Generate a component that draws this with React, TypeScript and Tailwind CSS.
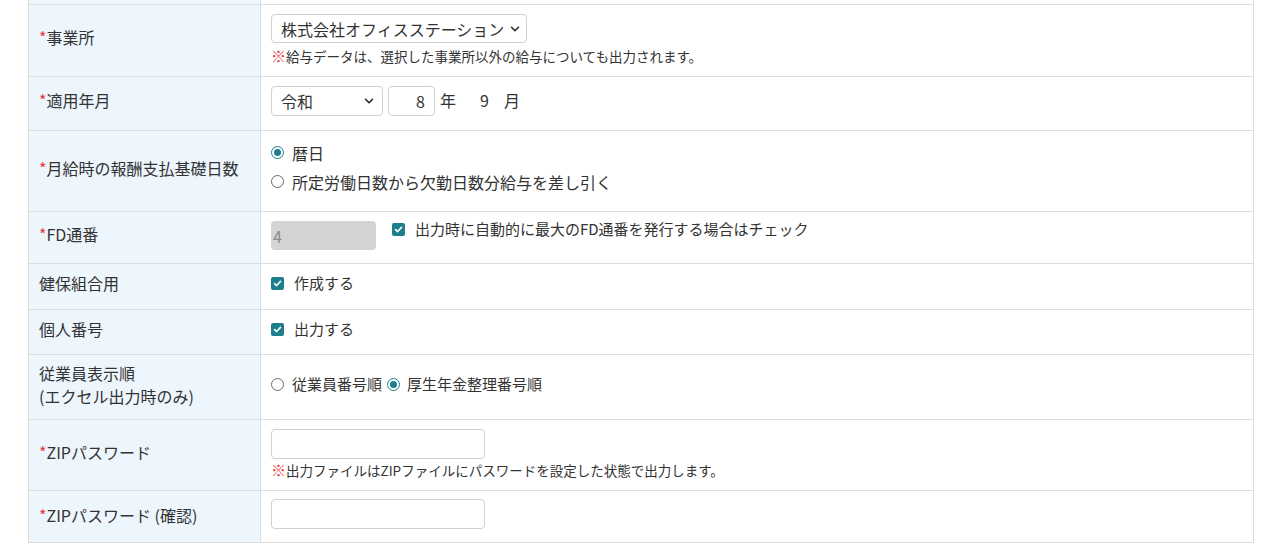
const FONT = "font-['Noto_Sans_CJK_JP','Noto_Sans',sans-serif]";

function Req() {
  return <span className="text-[#e8383d]">*</span>;
}

function Radio({ checked }: { checked?: boolean }) {
  return checked ? (
    <span className="w-[13px] h-[13px] rounded-full border-[1.5px] border-[#1d7f8c] bg-white flex items-center justify-center shrink-0">
      <span className="w-[7px] h-[7px] rounded-full bg-[#1d7f8c]" />
    </span>
  ) : (
    <span className="w-[13px] h-[13px] rounded-full border border-[#6b6b6b] bg-white shrink-0" />
  );
}

function Check() {
  return (
    <span className="w-[13px] h-[13px] rounded-[2px] bg-[#1d7f8c] flex items-center justify-center shrink-0">
      <svg width="9" height="9" viewBox="0 0 10 10" fill="none">
        <path d="M1.8 5.2 L4 7.3 L8.3 2.6" stroke="white" strokeWidth="1.8" strokeLinecap="round" strokeLinejoin="round" />
      </svg>
    </span>
  );
}

function Chevron() {
  return (
    <svg width="10" height="10" viewBox="0 0 10 10" fill="none" className="shrink-0">
      <path d="M1.5 3.2 L5 6.7 L8.5 3.2" stroke="#222" strokeWidth="1.5" strokeLinecap="round" strokeLinejoin="round" />
    </svg>
  );
}

function Note({ children }: { children: React.ReactNode }) {
  return (
    <div className="text-[13.5px] leading-[18px] text-[#333]">
      <span className="text-[#e8383d] font-bold text-[15px]">※</span>{children}
    </div>
  );
}

function Row({
  h,
  label,
  children,
  contentClass = "items-center",
}: {
  h: string;
  label: React.ReactNode;
  children?: React.ReactNode;
  contentClass?: string;
}) {
  return (
    <div className={`flex border-b border-[#dcdcdc] ${h}`}>
      <div className="w-[232px] shrink-0 bg-[#edf5fd] border-r border-[#dcdcdc] pl-[10px] pb-[6px] flex items-center text-[16px] leading-[23px] text-[#333]">
        {label}
      </div>
      <div className={`flex-1 pl-[10px] flex ${contentClass}`}>{children}</div>
    </div>
  );
}

export default function App() {
  return (
    <div className={`w-[1280px] h-[548px] bg-white overflow-hidden ${FONT} text-[#333]`}>
      <div className="ml-[28px] w-[1226px] border-x border-b border-[#dcdcdc]">
        {/* cut-off row above */}
        <div className="flex h-[5px] border-b border-[#dcdcdc]">
          <div className="w-[232px] bg-[#edf5fd] border-r border-[#dcdcdc]" />
        </div>

        <Row h="h-[72px]" label={<span><Req />事業所</span>} contentClass="flex-col justify-start pt-[9px]">
          <div className="w-[256px] h-[29px] border border-[#d0d0d0] rounded-[4px] bg-white flex items-center justify-between pl-[9px] pr-[6px] text-[16px]">
            <span>株式会社オフィスステーション</span>
            <Chevron />
          </div>
          <div className="mt-[4px]">
            <Note>給与データは、選択した事業所以外の給与についても出力されます。</Note>
          </div>
        </Row>

        <Row h="h-[54px]" label={<span><Req />適用年月</span>} contentClass="items-start pt-[9px]">
          <div className="w-[112px] h-[30px] border border-[#d0d0d0] rounded-[4px] bg-white flex items-center justify-between pl-[9px] pr-[8px] text-[16px]">
            <span>令和</span>
            <Chevron />
          </div>
          <div className="ml-[5px] w-[47px] h-[30px] border border-[#d0d0d0] rounded-[4px] bg-white flex items-center justify-end pr-[9px] text-[16px]">
            8
          </div>
          <div className="h-[30px] flex items-center text-[16px] ml-[5px] pb-[2px]">
            <span>年</span>
            <span className="ml-[24px]">9</span>
            <span className="ml-[15px]">月</span>
          </div>
        </Row>

        <Row h="h-[81px]" label={<span><Req />月給時の報酬支払基礎日数</span>} contentClass="flex-col justify-start pt-[10px]">
          <div className="flex items-center gap-[8px] h-[23px] text-[16px]">
            <Radio checked />
            <span>暦日</span>
          </div>
          <div className="flex items-center gap-[8px] h-[23px] mt-[6px] text-[16px]">
            <Radio />
            <span>所定労働日数から欠勤日数分給与を差し引く</span>
          </div>
        </Row>

        <Row h="h-[52px]" label={<span><Req />FD通番</span>} contentClass="items-start pt-[9px]">
          <div className="w-[105px] h-[29px] rounded-[4px] bg-[#d4d4d4] flex items-center pl-[2px] text-[16px] text-[#8a8a8a]">
            4
          </div>
          <div className="ml-[16px] mt-[-3px] flex items-center gap-[10px] h-[23px] text-[15px]">
            <Check />
            <span>出力時に自動的に最大のFD通番を発行する場合はチェック</span>
          </div>
        </Row>

        <Row h="h-[46px]" label="健保組合用">
          <div className="flex items-center gap-[10px] text-[15px] mb-[6px]">
            <Check />
            <span>作成する</span>
          </div>
        </Row>

        <Row h="h-[45px]" label="個人番号">
          <div className="flex items-center gap-[10px] text-[15px] mb-[6px]">
            <Check />
            <span>出力する</span>
          </div>
        </Row>

        <Row
          h="h-[65px]"
          label={
            <div className="leading-[23px] mt-[2px]">
              <div>従業員表示順</div>
              <div>(エクセル出力時のみ)</div>
            </div>
          }
        >
          <div className="flex items-center text-[15px] mb-[6px]">
            <Radio />
            <span className="ml-[8px]">従業員番号順</span>
            <span className="ml-[5px]"><Radio checked /></span>
            <span className="ml-[7px]">厚生年金整理番号順</span>
          </div>
        </Row>

        <Row h="h-[71px]" label={<span><Req />ZIPパスワード</span>} contentClass="flex-col justify-start pt-[9px]">
          <div className="w-[214px] h-[30px] border border-[#d0d0d0] rounded-[4px] bg-white" />
          <div className="mt-[2px]">
            <Note>出力ファイルはZIPファイルにパスワードを設定した状態で出力します。</Note>
          </div>
        </Row>

        <div className="flex h-[51px]">
          <div className="w-[232px] shrink-0 bg-[#edf5fd] border-r border-[#dcdcdc] pl-[10px] pb-[4px] flex items-center text-[16px] text-[#333]">
            <span><Req />ZIPパスワード (確認)</span>
          </div>
          <div className="flex-1 pl-[10px] pt-[8px]">
            <div className="w-[214px] h-[30px] border border-[#d0d0d0] rounded-[4px] bg-white" />
          </div>
        </div>
      </div>
    </div>
  );
}
